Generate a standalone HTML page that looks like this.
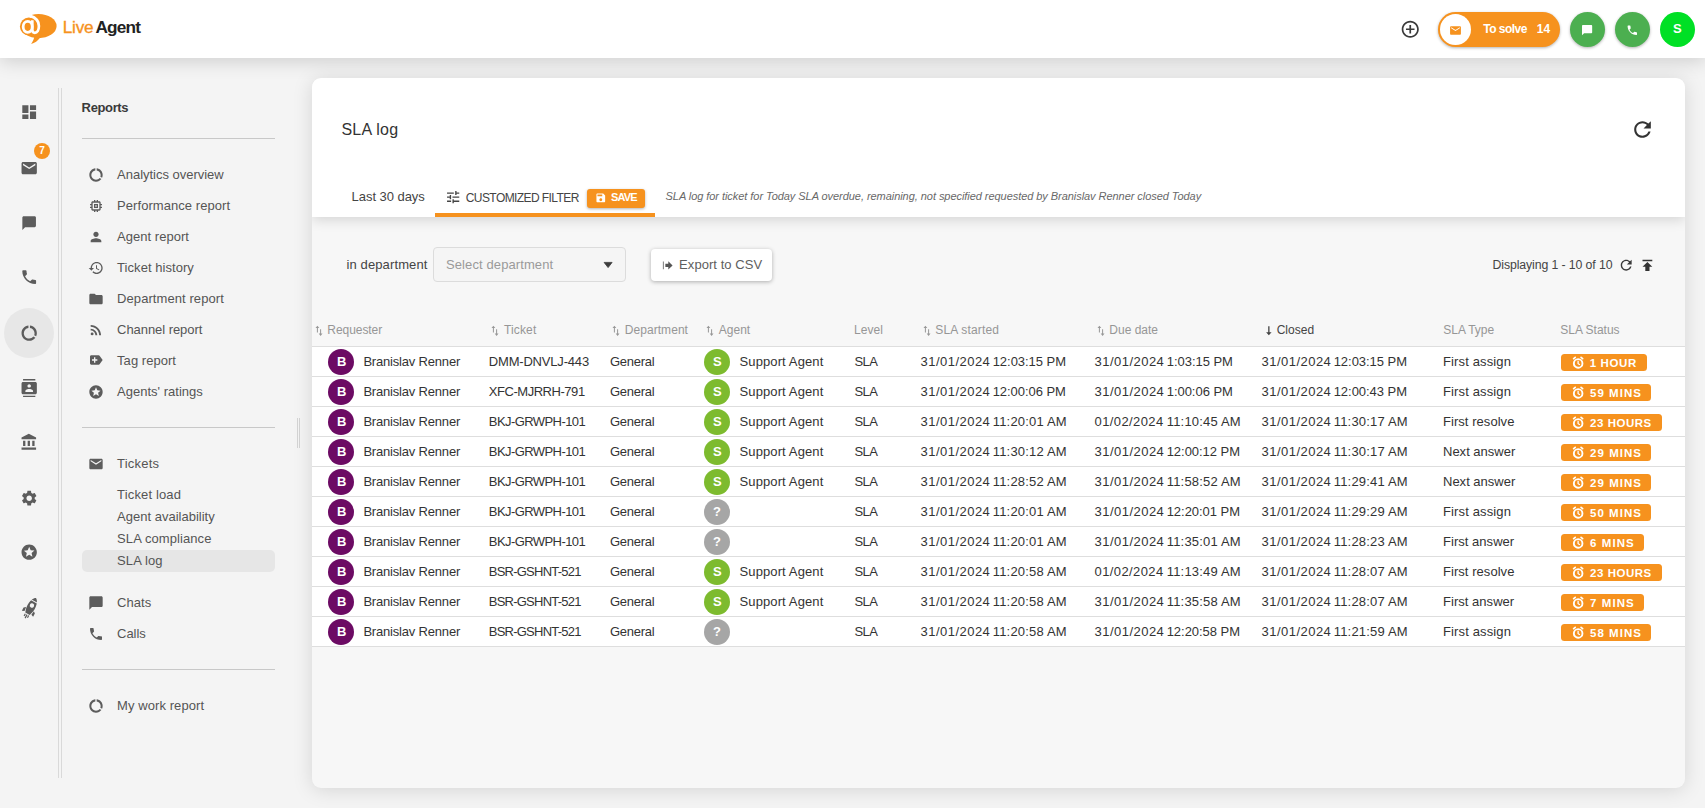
<!DOCTYPE html>
<html lang="en"><head><meta charset="utf-8"><title>SLA log - LiveAgent</title>
<style>
*{box-sizing:border-box;margin:0;padding:0}
html,body{width:1705px;height:808px;overflow:hidden;background:#f4f4f4;font-family:"Liberation Sans",sans-serif}
.t{position:absolute;white-space:nowrap;line-height:1}
.ic{position:absolute;display:block}
.hdr{position:absolute;left:0;top:0;width:1705px;height:58px;background:#fff;box-shadow:0 3px 18px rgba(0,0,0,.16)}
.pill{position:absolute;left:1438px;top:12px;width:122px;height:35px;border-radius:18px;background:#F6921E;box-shadow:0 1px 3px rgba(0,0,0,.3)}
.pillc{position:absolute;left:2px;top:2px;width:31px;height:31px;border-radius:50%;background:#fff}
.rb{position:absolute;top:12px;width:35px;height:35px;border-radius:50%;box-shadow:0 1px 3px rgba(0,0,0,.3)}
.vl{position:absolute;top:88px;width:1px;height:690px;background:#d9d9d9}
.actbg{position:absolute;left:4px;top:308px;width:50px;height:50px;border-radius:50%;background:#e7e7e7}
.bdg{position:absolute;left:33.9px;top:142.8px;width:16.1px;height:16.1px;border-radius:50%;background:#F6921E}
.hl{position:absolute;left:82px;width:193px;height:1px;background:#c8c8c8}
.sel{position:absolute;left:82px;top:550px;width:193px;height:22px;border-radius:5px;background:#e6e6e6}
.handle{position:absolute;top:418px;width:1px;height:30px;background:#d4d4d4}
.card{position:absolute;left:312px;top:78px;width:1373px;height:710px;border-radius:9px;background:#f7f7f7;box-shadow:0 2px 20px rgba(0,0,0,.13);overflow:hidden}
.cardtop{position:absolute;left:0;top:0;width:100%;height:139px;background:#fff;box-shadow:0 3px 12px rgba(0,0,0,.14)}
.tabline{position:absolute;left:435px;top:213px;width:220px;height:4px;background:#F6921E}
.savebtn{position:absolute;left:587px;top:189px;width:58px;height:18.5px;border-radius:3px;background:#F6921E;box-shadow:0 1px 3px rgba(0,0,0,.3)}
.selbox{position:absolute;left:433px;top:247px;width:193px;height:35px;border-radius:4px;background:#f5f5f5;border:1px solid #dcdcdc}
.expbtn{position:absolute;left:651px;top:249px;width:121px;height:32px;border-radius:4px;background:#fff;box-shadow:0 1px 4px rgba(0,0,0,.3)}
.tbl{position:absolute;left:312px;top:346px;width:1373px;height:301px;background:#fff;border-top:1px solid #dedede}
.row{position:absolute;left:0;width:100%;height:30px;border-bottom:1px solid #dedede}
.av{position:absolute;width:26px;height:26px;border-radius:50%}
.sb{position:absolute;left:1561px;height:17px;border-radius:3.5px;background:#F6921E}
</style></head>
<body>
<div class="hdr"></div>
<svg class="ic" style="left:14px;top:8px;width:50px;height:42px" viewBox="14 8 50 42">
<clipPath id="lc"><path d="M31.200 8H64V50H14V26.500H31.200z"/></clipPath>
<ellipse cx="38.500" cy="26.050" rx="18.100" ry="12.100" fill="#F6921E" clip-path="url(#lc)"/>
<ellipse cx="28.800" cy="26.500" rx="8.850" ry="8.900" fill="#F6921E"/>
<path fill="#F6921E" d="M34.300 36.500C33.800 39.500 32.700 42 31.100 43.900 34.800 43.100 37.800 40.900 40.200 37.500z"/>
<ellipse cx="27.700" cy="26.850" rx="4.550" ry="5.500" fill="none" stroke="#fff" stroke-width="2.800"/>
<path fill="none" stroke="#fff" stroke-width="2.700" d="M32.300 20.200v9.400c0 2.100.9 3.200 2.500 3.200 2.300 0 4.100-2.700 4.100-6.700 0-4.700-3.300-8.500-8.600-10.200"/>
</svg>
<svg class="ic" style="left:1399.95px;top:18.85px;width:20.5px;height:20.5px;" viewBox="0 0 24 24"><path fill="#3a3a3a" d="M13 7h-2v4H7v2h4v4h2v-4h4v-2h-4V7zm-1-5C6.48 2 2 6.48 2 12s4.48 10 10 10 10-4.48 10-10S17.52 2 12 2zm0 18c-4.41 0-8-3.59-8-8s3.59-8 8-8 8 3.59 8 8-3.59 8-8 8z"/></svg>
<div class="pill"><div class="pillc"></div></div>
<svg class="ic" style="left:1449.10px;top:24.00px;width:13px;height:13px;" viewBox="0 0 24 24"><path fill="#F6921E" d="M20 4H4c-1.1 0-1.99.9-1.99 2L2 18c0 1.1.9 2 2 2h16c1.1 0 2-.9 2-2V6c0-1.1-.9-2-2-2zm0 4l-8 5-8-5V6l8 5 8-5v2z"/></svg>
<div class="rb" style="left:1570px;background:#4CAF50"></div>
<div class="rb" style="left:1615px;background:#4CAF50"></div>
<div class="rb" style="left:1660px;background:#00E025;box-shadow:none"></div>
<svg class="ic" style="left:1581.40px;top:23.90px;width:12.2px;height:12.2px;" viewBox="0 0 24 24"><path fill="#fff" d="M20 2H4c-1.1 0-2 .9-2 2v18l4-4h14c1.1 0 2-.9 2-2V4c0-1.1-.9-2-2-2z"/></svg>
<svg class="ic" style="left:1626.10px;top:23.50px;width:12.6px;height:12.6px;" viewBox="0 0 24 24"><path fill="#fff" d="M6.62 10.79c1.44 2.83 3.76 5.14 6.59 6.59l2.2-2.2c.27-.27.67-.36 1.02-.24 1.12.37 2.33.57 3.57.57.55 0 1 .45 1 1V20c0 .55-.45 1-1 1-9.39 0-17-7.61-17-17 0-.55.45-1 1-1h3.5c.55 0 1 .45 1 1 0 1.25.2 2.45.57 3.57.11.35.03.74-.25 1.02l-2.2 2.2z"/></svg>
<div class="vl" style="left:58px"></div><div class="vl" style="left:61px"></div>
<div class="actbg"></div>
<svg class="ic" style="left:19.80px;top:103.30px;width:18.4px;height:18.4px;" viewBox="0 0 24 24"><path fill="#5c5c5c" d="M3 13h8V3H3v10zm0 8h8v-6H3v6zm10 0h8V11h-8v10zm0-18v6h8V3h-8z"/></svg>
<svg class="ic" style="left:19.80px;top:158.80px;width:18.4px;height:18.4px;" viewBox="0 0 24 24"><path fill="#5c5c5c" d="M20 4H4c-1.1 0-1.99.9-1.99 2L2 18c0 1.1.9 2 2 2h16c1.1 0 2-.9 2-2V6c0-1.1-.9-2-2-2zm0 4l-8 5-8-5V6l8 5 8-5v2z"/></svg>
<svg class="ic" style="left:20.85px;top:214.55px;width:16.3px;height:16.3px;" viewBox="0 0 24 24"><path fill="#5c5c5c" d="M20 2H4c-1.1 0-2 .9-2 2v18l4-4h14c1.1 0 2-.9 2-2V4c0-1.1-.9-2-2-2z"/></svg>
<svg class="ic" style="left:19.80px;top:268.40px;width:18.4px;height:18.4px;" viewBox="0 0 24 24"><path fill="#5c5c5c" d="M6.62 10.79c1.44 2.83 3.76 5.14 6.59 6.59l2.2-2.2c.27-.27.67-.36 1.02-.24 1.12.37 2.33.57 3.57.57.55 0 1 .45 1 1V20c0 .55-.45 1-1 1-9.39 0-17-7.61-17-17 0-.55.45-1 1-1h3.5c.55 0 1 .45 1 1 0 1.25.2 2.45.57 3.57.11.35.03.74-.25 1.02l-2.2 2.2z"/></svg>
<svg class="ic" style="left:19.80px;top:323.80px;width:18.4px;height:18.4px;" viewBox="0 0 24 24"><path fill="#5c5c5c" d="M13 2.05v3.03c3.39.49 6 3.39 6 6.92 0 .9-.18 1.75-.48 2.54l2.6 1.53c.56-1.24.88-2.62.88-4.07 0-5.18-3.95-9.45-9-9.95zM12 19c-3.87 0-7-3.13-7-7 0-3.53 2.61-6.43 6-6.92V2.05c-5.06.5-9 4.76-9 9.95 0 5.52 4.47 10 9.99 10 3.31 0 6.24-1.61 8.06-4.09l-2.6-1.53C16.17 17.98 14.21 19 12 19z"/></svg>
<svg class="ic" style="left:19.80px;top:378.80px;width:18.4px;height:18.4px;" viewBox="0 0 24 24"><path fill="#5c5c5c" d="M20 0H4v2h16V0zM4 24h16v-2H4v2zM20 4H4c-1.1 0-2 .9-2 2v12c0 1.1.9 2 2 2h16c1.1 0 2-.9 2-2V6c0-1.1-.9-2-2-2zm-8 2.75c1.24 0 2.25 1.01 2.25 2.25s-1.01 2.25-2.25 2.25S9.75 10.24 9.75 9 10.76 6.75 12 6.75zM17 17H7v-1.5c0-1.67 3.33-2.5 5-2.5s5 .83 5 2.5V17z"/></svg>
<svg class="ic" style="left:19.80px;top:433.10px;width:18.4px;height:18.4px;" viewBox="0 0 24 24"><path fill="#5c5c5c" d="M4 10v7h3v-7H4zm6 0v7h3v-7h-3zM2 22h19v-3H2v3zm14-12v7h3v-7h-3zm-4.5-9L2 6v2h19V6l-9.5-5z"/></svg>
<svg class="ic" style="left:19.80px;top:488.80px;width:18.4px;height:18.4px;" viewBox="0 0 24 24"><path fill="#5c5c5c" d="M19.14 12.94c.04-.3.06-.61.06-.94 0-.32-.02-.64-.07-.94l2.03-1.58c.18-.14.23-.41.12-.61l-1.92-3.32c-.12-.22-.37-.29-.59-.22l-2.39.96c-.5-.38-1.03-.7-1.62-.94l-.36-2.54c-.04-.24-.24-.41-.48-.41h-3.84c-.24 0-.43.17-.47.41l-.36 2.54c-.59.24-1.13.57-1.62.94l-2.39-.96c-.22-.08-.47 0-.59.22L2.74 8.87c-.12.21-.08.47.12.61l2.03 1.58c-.05.3-.09.63-.09.94s.02.64.07.94l-2.03 1.58c-.18.14-.23.41-.12.61l1.92 3.32c.12.22.37.29.59.22l2.39-.96c.5.38 1.03.7 1.62.94l.36 2.54c.05.24.24.41.48.41h3.84c.24 0 .44-.17.47-.41l.36-2.54c.59-.24 1.13-.56 1.62-.94l2.39.96c.22.08.47 0 .59-.22l1.92-3.32c.12-.22.07-.47-.12-.61l-2.01-1.58zM12 15.6c-1.98 0-3.6-1.62-3.6-3.6s1.62-3.6 3.6-3.6 3.6 1.62 3.6 3.6-1.62 3.6-3.6 3.6z"/></svg>
<svg class="ic" style="left:19.80px;top:542.80px;width:18.4px;height:18.4px;" viewBox="0 0 24 24"><path fill="#5c5c5c" d="M11.99 2C6.47 2 2 6.48 2 12s4.47 10 9.99 10C17.52 22 22 17.52 22 12S17.52 2 11.99 2zm4.24 16L12 15.45 7.77 18l1.12-4.81-3.73-3.23 4.92-.42L12 5l1.92 4.53 4.92.42-3.73 3.23L16.23 18z"/></svg>
<svg class="ic" style="left:17px;top:593px;width:26px;height:28px" viewBox="17 593 26 28"><g transform="translate(31.300 606.700) rotate(28.400)" fill="#5c5c5c">
<path d="M0-9.900C2.300-8.700 4.300-4.600 4.100.6 4 3.600 3.200 6 2.500 8H-2.500C-3.200 6-4 3.600-4.100.6-4.300-4.600-2.300-8.700 0-9.900z"/>
<path d="M-4.400 2.700-6.400 4.400V8L-3.900 7zM4.400 2.700 6.400 4.400V8L3.900 7z"/>
<path d="M-2.500 9h1.200v2.600h-1.200zM-.6 9H.6v4H-.6zM1.300 9h1.200v2.600H1.300z"/>
<circle cx="0" cy="-1.400" r="2.200" fill="#f4f4f4"/><path d="M-3.200-6.400H3.200v.9H-3.200z" fill="#f4f4f4"/></g></svg>
<div class="bdg"></div>
<div class="hl" style="top:138px"></div>
<div class="hl" style="top:427px"></div>
<div class="hl" style="top:669px"></div>
<div class="sel"></div>
<svg class="ic" style="left:87.90px;top:166.60px;width:16px;height:16px;" viewBox="0 0 24 24"><path fill="#5c5c5c" d="M13 2.05v3.03c3.39.49 6 3.39 6 6.92 0 .9-.18 1.75-.48 2.54l2.6 1.53c.56-1.24.88-2.62.88-4.07 0-5.18-3.95-9.45-9-9.95zM12 19c-3.87 0-7-3.13-7-7 0-3.53 2.61-6.43 6-6.92V2.05c-5.06.5-9 4.76-9 9.95 0 5.52 4.47 10 9.99 10 3.31 0 6.24-1.61 8.06-4.09l-2.6-1.53C16.17 17.98 14.21 19 12 19z"/></svg>
<svg class="ic" style="left:87.90px;top:197.60px;width:16px;height:16px;" viewBox="0 0 24 24"><path fill="#5c5c5c" d="M15 9H9v6h6V9zm-2 4h-2v-2h2v2zm8-2V9h-2V7c0-1.1-.9-2-2-2h-2V3h-2v2h-2V3H9v2H7c-1.1 0-2 .9-2 2v2H3v2h2v2H3v2h2v2c0 1.1.9 2 2 2h2v2h2v-2h2v2h2v-2h2c1.1 0 2-.9 2-2v-2h2v-2h-2v-2h2zm-4 6H7V7h10v10z"/></svg>
<svg class="ic" style="left:87.90px;top:228.60px;width:16px;height:16px;" viewBox="0 0 24 24"><path fill="#5c5c5c" d="M12 12c2.21 0 4-1.79 4-4s-1.79-4-4-4-4 1.79-4 4 1.79 4 4 4zm0 2c-2.67 0-8 1.34-8 4v2h16v-2c0-2.66-5.33-4-8-4z"/></svg>
<svg class="ic" style="left:87.90px;top:259.60px;width:16px;height:16px;" viewBox="0 0 24 24"><path fill="#5c5c5c" d="M13 3c-4.97 0-9 4.03-9 9H1l3.89 3.89.07.14L9 12H6c0-3.87 3.13-7 7-7s7 3.13 7 7-3.13 7-7 7c-1.93 0-3.68-.79-4.94-2.06l-1.42 1.42C8.27 19.99 10.51 21 13 21c4.97 0 9-4.03 9-9s-4.03-9-9-9zm-1 5v5l4.28 2.54.72-1.21-3.5-2.08V8H12z"/></svg>
<svg class="ic" style="left:87.90px;top:290.60px;width:16px;height:16px;" viewBox="0 0 24 24"><path fill="#5c5c5c" d="M10 4H4c-1.1 0-1.99.9-1.99 2L2 18c0 1.1.9 2 2 2h16c1.1 0 2-.9 2-2V8c0-1.1-.9-2-2-2h-8l-2-2z"/></svg>
<svg class="ic" style="left:87.90px;top:321.60px;width:16px;height:16px;" viewBox="0 0 24 24"><path fill="#5c5c5c" d="M6.18 15.64a2.18 2.18 0 1 0 0 4.36 2.18 2.18 0 0 0 0-4.36zM4 4.44v2.83c7.03 0 12.73 5.7 12.73 12.73h2.83c0-8.59-6.97-15.56-15.56-15.56zm0 5.66v2.83c3.9 0 7.07 3.17 7.07 7.07h2.83c0-5.47-4.43-9.9-9.9-9.9z"/></svg>
<svg class="ic" style="left:87.90px;top:351.80px;width:16px;height:16px;" viewBox="0 0 24 24"><path fill="#5c5c5c" d="M17.63 5.84C17.27 5.33 16.67 5 16 5L5 5.01C3.9 5.01 3 5.9 3 7v10c0 1.1.9 1.99 2 1.99L16 19c.67 0 1.27-.33 1.63-.84L22 12l-4.37-6.16zM14 13h-3v3H9v-3H6v-2h3V8h2v3h3v2z"/></svg>
<svg class="ic" style="left:87.90px;top:383.60px;width:16px;height:16px;" viewBox="0 0 24 24"><path fill="#5c5c5c" d="M11.99 2C6.47 2 2 6.48 2 12s4.47 10 9.99 10C17.52 22 22 17.52 22 12S17.52 2 11.99 2zm4.24 16L12 15.45 7.77 18l1.12-4.81-3.73-3.23 4.92-.42L12 5l1.92 4.53 4.92.42-3.73 3.23L16.23 18z"/></svg>
<svg class="ic" style="left:87.90px;top:455.60px;width:16px;height:16px;" viewBox="0 0 24 24"><path fill="#5c5c5c" d="M20 4H4c-1.1 0-1.99.9-1.99 2L2 18c0 1.1.9 2 2 2h16c1.1 0 2-.9 2-2V6c0-1.1-.9-2-2-2zm0 4l-8 5-8-5V6l8 5 8-5v2z"/></svg>
<svg class="ic" style="left:87.90px;top:594.60px;width:16px;height:16px;" viewBox="0 0 24 24"><path fill="#5c5c5c" d="M20 2H4c-1.1 0-2 .9-2 2v18l4-4h14c1.1 0 2-.9 2-2V4c0-1.1-.9-2-2-2z"/></svg>
<svg class="ic" style="left:87.90px;top:625.60px;width:16px;height:16px;" viewBox="0 0 24 24"><path fill="#5c5c5c" d="M6.62 10.79c1.44 2.83 3.76 5.14 6.59 6.59l2.2-2.2c.27-.27.67-.36 1.02-.24 1.12.37 2.33.57 3.57.57.55 0 1 .45 1 1V20c0 .55-.45 1-1 1-9.39 0-17-7.61-17-17 0-.55.45-1 1-1h3.5c.55 0 1 .45 1 1 0 1.25.2 2.45.57 3.57.11.35.03.74-.25 1.02l-2.2 2.2z"/></svg>
<svg class="ic" style="left:87.90px;top:697.60px;width:16px;height:16px;" viewBox="0 0 24 24"><path fill="#5c5c5c" d="M13 2.05v3.03c3.39.49 6 3.39 6 6.92 0 .9-.18 1.75-.48 2.54l2.6 1.53c.56-1.24.88-2.62.88-4.07 0-5.18-3.95-9.45-9-9.95zM12 19c-3.87 0-7-3.13-7-7 0-3.53 2.61-6.43 6-6.92V2.05c-5.06.5-9 4.76-9 9.95 0 5.52 4.47 10 9.99 10 3.31 0 6.24-1.61 8.06-4.09l-2.6-1.53C16.17 17.98 14.21 19 12 19z"/></svg>
<div class="handle" style="left:297px"></div><div class="handle" style="left:299px"></div>
<div class="card"><div class="cardtop"></div></div>
<svg class="ic" style="left:1629.80px;top:117.00px;width:25px;height:25px;" viewBox="0 0 24 24"><path fill="#333" d="M17.65 6.35C16.2 4.9 14.21 4 12 4c-4.42 0-7.99 3.58-7.99 8s3.57 8 7.99 8c3.73 0 6.84-2.55 7.73-6h-2.08c-.82 2.33-3.04 4-5.65 4-3.31 0-6-2.69-6-6s2.69-6 6-6c1.66 0 3.14.69 4.22 1.78L13 11h7V4l-2.35 2.35z"/></svg>
<svg class="ic" style="left:444.85px;top:188.85px;width:16.3px;height:16.3px;" viewBox="0 0 24 24"><path fill="#444" d="M3 17v2h6v-2H3zM3 5v2h10V5H3zm10 16v-2h8v-2h-8v-2h-2v6h2zM7 9v2H3v2h4v2h2V9H7zm14 4v-2H11v2h10zm-6-4h2V7h4V5h-4V3h-2v6z"/></svg>
<div class="savebtn"></div>
<svg class="ic" style="left:594.60px;top:191.50px;width:11.6px;height:11.6px;" viewBox="0 0 24 24"><path fill="#fff" d="M17 3H5c-1.11 0-2 .9-2 2v14c0 1.1.89 2 2 2h14c1.1 0 2-.9 2-2V7l-4-4zm-5 16c-1.66 0-3-1.34-3-3s1.34-3 3-3 3 1.34 3 3-1.34 3-3 3zm3-10H5V5h10v4z"/></svg>
<div class="tabline"></div>
<div class="selbox"></div>
<svg class="ic" style="left:602px;top:260px;width:12px;height:10px" viewBox="602 260 12 10"><path fill="#3c3c3c" stroke="#3c3c3c" stroke-width=".8" stroke-linejoin="round" d="M604.100 262.400h8l-4 5.200z"/></svg>
<div class="expbtn"></div>
<svg class="ic" style="left:661.90px;top:259.60px;width:10.8px;height:10.8px;" viewBox="0 0 24 24"><path fill="#555" d="M2 3.500h1.700v17H2v-17zm5.500 5h6.500V3l9.500 9-9.500 9v-5.500H7.500v-7z"/></svg>
<svg class="ic" style="left:1617.70px;top:256.90px;width:16.4px;height:16.4px;" viewBox="0 0 24 24"><path fill="#3a3a3a" d="M17.65 6.35C16.2 4.9 14.21 4 12 4c-4.42 0-7.99 3.58-7.99 8s3.57 8 7.99 8c3.73 0 6.84-2.55 7.73-6h-2.08c-.82 2.33-3.04 4-5.65 4-3.31 0-6-2.69-6-6s2.69-6 6-6c1.66 0 3.14.69 4.22 1.78L13 11h7V4l-2.35 2.35z"/></svg>
<svg class="ic" style="left:1638.50px;top:256.70px;width:16.8px;height:16.8px;" viewBox="0 0 24 24"><path fill="#333" d="M5 4v2h14V4H5zm0 10h4v6h6v-6h4l-7-7-7 7z"/></svg>
<svg class="ic" style="left:315.0px;top:325px;width:8px;height:12px" viewBox="0 0 8 12"><path fill="#979797" d="M1.900 2.200h1v5.200h-1zM.5 3.100 2.400.8l1.900 2.300zM5.100 4.300h1v5.200h-1zM3.700 8.600h3.800L5.600 10.900z"/></svg>
<svg class="ic" style="left:491.0px;top:325px;width:8px;height:12px" viewBox="0 0 8 12"><path fill="#979797" d="M1.900 2.200h1v5.200h-1zM.5 3.100 2.400.8l1.900 2.300zM5.100 4.300h1v5.200h-1zM3.700 8.600h3.800L5.600 10.900z"/></svg>
<svg class="ic" style="left:612.3px;top:325px;width:8px;height:12px" viewBox="0 0 8 12"><path fill="#979797" d="M1.900 2.200h1v5.200h-1zM.5 3.100 2.400.8l1.900 2.300zM5.100 4.300h1v5.200h-1zM3.700 8.600h3.800L5.600 10.900z"/></svg>
<svg class="ic" style="left:705.9px;top:325px;width:8px;height:12px" viewBox="0 0 8 12"><path fill="#979797" d="M1.900 2.200h1v5.200h-1zM.5 3.100 2.400.8l1.900 2.300zM5.100 4.300h1v5.200h-1zM3.700 8.600h3.800L5.600 10.900z"/></svg>
<svg class="ic" style="left:922.7px;top:325px;width:8px;height:12px" viewBox="0 0 8 12"><path fill="#979797" d="M1.900 2.200h1v5.200h-1zM.5 3.100 2.400.8l1.900 2.300zM5.100 4.300h1v5.200h-1zM3.700 8.600h3.800L5.600 10.900z"/></svg>
<svg class="ic" style="left:1096.9px;top:325px;width:8px;height:12px" viewBox="0 0 8 12"><path fill="#979797" d="M1.900 2.200h1v5.200h-1zM.5 3.100 2.400.8l1.900 2.300zM5.100 4.300h1v5.200h-1zM3.700 8.600h3.800L5.600 10.900z"/></svg>
<svg class="ic" style="left:1264.6px;top:325px;width:8px;height:12px" viewBox="0 0 8 12"><path fill="#444" d="M3.200 1.300h1.300v6.200h-1.300zM1.100 7.200h5.500L3.850 10.300z"/></svg>
<div class="tbl">
<div class="row" style="top:0px"></div>
<div class="row" style="top:30px"></div>
<div class="row" style="top:60px"></div>
<div class="row" style="top:90px"></div>
<div class="row" style="top:120px"></div>
<div class="row" style="top:150px"></div>
<div class="row" style="top:180px"></div>
<div class="row" style="top:210px"></div>
<div class="row" style="top:240px"></div>
<div class="row" style="top:270px"></div>
</div>
<div class="av" style="top:349px;left:328px;background:#6C0B64"></div>
<div class="av" style="top:349px;left:704px;background:#7DBB2E"></div>
<div class="sb" style="top:354px;width:86px"></div>
<svg class="ic" style="left:1571px;top:355px;width:14px;height:15px" viewBox="0 0 14 15"><g fill="none" stroke="#fff"><circle cx="7.150" cy="8.400" r="4.300" stroke-width="1.900"/><path stroke-width="1.300" d="M7.100 5.800v2.900l1.900 1.100"/><path stroke-width="1.800" stroke-linecap="round" d="M2.700 3.600 4.200 2.400M10.100 2.400l1.500 1.200"/></g></svg>
<div class="av" style="top:379px;left:328px;background:#6C0B64"></div>
<div class="av" style="top:379px;left:704px;background:#7DBB2E"></div>
<div class="sb" style="top:384px;width:90px"></div>
<svg class="ic" style="left:1571px;top:385px;width:14px;height:15px" viewBox="0 0 14 15"><g fill="none" stroke="#fff"><circle cx="7.150" cy="8.400" r="4.300" stroke-width="1.900"/><path stroke-width="1.300" d="M7.100 5.800v2.900l1.900 1.100"/><path stroke-width="1.800" stroke-linecap="round" d="M2.700 3.600 4.200 2.400M10.100 2.400l1.500 1.200"/></g></svg>
<div class="av" style="top:409px;left:328px;background:#6C0B64"></div>
<div class="av" style="top:409px;left:704px;background:#7DBB2E"></div>
<div class="sb" style="top:414px;width:100.6px"></div>
<svg class="ic" style="left:1571px;top:415px;width:14px;height:15px" viewBox="0 0 14 15"><g fill="none" stroke="#fff"><circle cx="7.150" cy="8.400" r="4.300" stroke-width="1.900"/><path stroke-width="1.300" d="M7.100 5.800v2.900l1.900 1.100"/><path stroke-width="1.800" stroke-linecap="round" d="M2.700 3.600 4.200 2.400M10.100 2.400l1.500 1.200"/></g></svg>
<div class="av" style="top:439px;left:328px;background:#6C0B64"></div>
<div class="av" style="top:439px;left:704px;background:#7DBB2E"></div>
<div class="sb" style="top:444px;width:90px"></div>
<svg class="ic" style="left:1571px;top:445px;width:14px;height:15px" viewBox="0 0 14 15"><g fill="none" stroke="#fff"><circle cx="7.150" cy="8.400" r="4.300" stroke-width="1.900"/><path stroke-width="1.300" d="M7.100 5.800v2.900l1.900 1.100"/><path stroke-width="1.800" stroke-linecap="round" d="M2.700 3.600 4.200 2.400M10.100 2.400l1.500 1.200"/></g></svg>
<div class="av" style="top:469px;left:328px;background:#6C0B64"></div>
<div class="av" style="top:469px;left:704px;background:#7DBB2E"></div>
<div class="sb" style="top:474px;width:90px"></div>
<svg class="ic" style="left:1571px;top:475px;width:14px;height:15px" viewBox="0 0 14 15"><g fill="none" stroke="#fff"><circle cx="7.150" cy="8.400" r="4.300" stroke-width="1.900"/><path stroke-width="1.300" d="M7.100 5.800v2.900l1.900 1.100"/><path stroke-width="1.800" stroke-linecap="round" d="M2.700 3.600 4.200 2.400M10.100 2.400l1.500 1.200"/></g></svg>
<div class="av" style="top:499px;left:328px;background:#6C0B64"></div>
<div class="av" style="top:499px;left:704px;background:#A6A6A6"></div>
<div class="sb" style="top:504px;width:90px"></div>
<svg class="ic" style="left:1571px;top:505px;width:14px;height:15px" viewBox="0 0 14 15"><g fill="none" stroke="#fff"><circle cx="7.150" cy="8.400" r="4.300" stroke-width="1.900"/><path stroke-width="1.300" d="M7.100 5.800v2.900l1.900 1.100"/><path stroke-width="1.800" stroke-linecap="round" d="M2.700 3.600 4.200 2.400M10.100 2.400l1.500 1.200"/></g></svg>
<div class="av" style="top:529px;left:328px;background:#6C0B64"></div>
<div class="av" style="top:529px;left:704px;background:#A6A6A6"></div>
<div class="sb" style="top:534px;width:82.5px"></div>
<svg class="ic" style="left:1571px;top:535px;width:14px;height:15px" viewBox="0 0 14 15"><g fill="none" stroke="#fff"><circle cx="7.150" cy="8.400" r="4.300" stroke-width="1.900"/><path stroke-width="1.300" d="M7.100 5.800v2.900l1.900 1.100"/><path stroke-width="1.800" stroke-linecap="round" d="M2.700 3.600 4.200 2.400M10.100 2.400l1.500 1.200"/></g></svg>
<div class="av" style="top:559px;left:328px;background:#6C0B64"></div>
<div class="av" style="top:559px;left:704px;background:#7DBB2E"></div>
<div class="sb" style="top:564px;width:100.6px"></div>
<svg class="ic" style="left:1571px;top:565px;width:14px;height:15px" viewBox="0 0 14 15"><g fill="none" stroke="#fff"><circle cx="7.150" cy="8.400" r="4.300" stroke-width="1.900"/><path stroke-width="1.300" d="M7.100 5.800v2.900l1.900 1.100"/><path stroke-width="1.800" stroke-linecap="round" d="M2.700 3.600 4.200 2.400M10.100 2.400l1.500 1.200"/></g></svg>
<div class="av" style="top:589px;left:328px;background:#6C0B64"></div>
<div class="av" style="top:589px;left:704px;background:#7DBB2E"></div>
<div class="sb" style="top:594px;width:82.5px"></div>
<svg class="ic" style="left:1571px;top:595px;width:14px;height:15px" viewBox="0 0 14 15"><g fill="none" stroke="#fff"><circle cx="7.150" cy="8.400" r="4.300" stroke-width="1.900"/><path stroke-width="1.300" d="M7.100 5.800v2.900l1.900 1.100"/><path stroke-width="1.800" stroke-linecap="round" d="M2.700 3.600 4.200 2.400M10.100 2.400l1.500 1.200"/></g></svg>
<div class="av" style="top:619px;left:328px;background:#6C0B64"></div>
<div class="av" style="top:619px;left:704px;background:#A6A6A6"></div>
<div class="sb" style="top:624px;width:90px"></div>
<svg class="ic" style="left:1571px;top:625px;width:14px;height:15px" viewBox="0 0 14 15"><g fill="none" stroke="#fff"><circle cx="7.150" cy="8.400" r="4.300" stroke-width="1.900"/><path stroke-width="1.300" d="M7.100 5.800v2.900l1.900 1.100"/><path stroke-width="1.800" stroke-linecap="round" d="M2.700 3.600 4.200 2.400M10.100 2.400l1.500 1.200"/></g></svg>
<span class="t" style="left:62.67px;top:19.00px;font-size:17.2px;color:#F6921E;-webkit-text-stroke:.35px #F6921E;letter-spacing:-0.170px;">Live</span>
<span class="t" style="left:95.46px;top:19.00px;font-size:17.2px;color:#222;font-weight:700;letter-spacing:-0.783px;">Agent</span>
<span class="t" style="left:1483.25px;top:23.00px;font-size:12px;color:#fff;font-weight:700;letter-spacing:-0.520px;">To solve</span>
<span class="t" style="left:1536.76px;top:23.00px;font-size:12px;color:#fff;font-weight:700;letter-spacing:0.090px;">14</span>
<span class="t" style="left:1672.90px;top:22.00px;font-size:13px;color:#fff;font-weight:700;">S</span>
<span class="t" style="left:39.20px;top:146.00px;font-size:10px;color:#fff;font-weight:700;">7</span>
<span class="t" style="left:81.62px;top:101.00px;font-size:13px;color:#3a3a3a;font-weight:700;letter-spacing:-0.367px;">Reports</span>
<span class="t" style="left:117.10px;top:168.00px;font-size:13px;color:#555;letter-spacing:-0.019px;">Analytics overview</span>
<span class="t" style="left:117.10px;top:199.00px;font-size:13px;color:#555;letter-spacing:0.058px;">Performance report</span>
<span class="t" style="left:117.10px;top:230.00px;font-size:13px;color:#555;letter-spacing:0.026px;">Agent report</span>
<span class="t" style="left:117.10px;top:261.00px;font-size:13px;color:#555;letter-spacing:0.053px;">Ticket history</span>
<span class="t" style="left:117.10px;top:292.00px;font-size:13px;color:#555;letter-spacing:0.074px;">Department report</span>
<span class="t" style="left:117.10px;top:323.00px;font-size:13px;color:#555;letter-spacing:-0.062px;">Channel report</span>
<span class="t" style="left:117.10px;top:354.00px;font-size:13px;color:#555;letter-spacing:0.029px;">Tag report</span>
<span class="t" style="left:117.10px;top:385.00px;font-size:13px;color:#555;letter-spacing:0.006px;">Agents&#x27; ratings</span>
<span class="t" style="left:117.10px;top:457.00px;font-size:13px;color:#555;letter-spacing:0.210px;">Tickets</span>
<span class="t" style="left:117.10px;top:488.00px;font-size:13px;color:#555;letter-spacing:0.147px;">Ticket load</span>
<span class="t" style="left:117.10px;top:510.00px;font-size:13px;color:#555;letter-spacing:0.002px;">Agent availability</span>
<span class="t" style="left:117.10px;top:532.00px;font-size:13px;color:#555;letter-spacing:0.083px;">SLA compliance</span>
<span class="t" style="left:117.10px;top:554.00px;font-size:13px;color:#555;letter-spacing:0.099px;">SLA log</span>
<span class="t" style="left:117.10px;top:596.00px;font-size:13px;color:#555;letter-spacing:0.024px;">Chats</span>
<span class="t" style="left:117.10px;top:627.00px;font-size:13px;color:#555;letter-spacing:-0.065px;">Calls</span>
<span class="t" style="left:117.10px;top:699.00px;font-size:13px;color:#555;letter-spacing:0.074px;">My work report</span>
<span class="t" style="left:341.39px;top:122.00px;font-size:16px;color:#333;letter-spacing:0.260px;">SLA log</span>
<span class="t" style="left:351.61px;top:190.00px;font-size:13px;color:#444;letter-spacing:-0.051px;">Last 30 days</span>
<span class="t" style="left:465.79px;top:192.00px;font-size:12px;color:#444;letter-spacing:-0.582px;">CUSTOMIZED FILTER</span>
<span class="t" style="left:610.93px;top:192.00px;font-size:11px;color:#fff;font-weight:700;letter-spacing:-0.797px;">SAVE</span>
<span class="t" style="left:665.54px;top:191.00px;font-size:11px;color:#686868;font-style:italic;letter-spacing:-0.053px;">SLA log for ticket for Today SLA overdue, remaining, not specified requested by Branislav Renner closed Today</span>
<span class="t" style="left:346.49px;top:258.00px;font-size:13px;color:#444;letter-spacing:0.120px;">in department</span>
<span class="t" style="left:446.02px;top:258.00px;font-size:13px;color:#9a9a9a;letter-spacing:0.101px;">Select department</span>
<span class="t" style="left:679.11px;top:258.00px;font-size:13px;color:#5e5e5e;letter-spacing:0.053px;">Export to CSV</span>
<span class="t" style="left:1492.57px;top:259.00px;font-size:12.3px;color:#444;letter-spacing:-0.111px;">Displaying 1 - 10 of 10</span>
<span class="t" style="left:327.32px;top:324.00px;font-size:12px;color:#969696;letter-spacing:-0.055px;">Requester</span>
<span class="t" style="left:503.97px;top:324.00px;font-size:12px;color:#969696;letter-spacing:0.147px;">Ticket</span>
<span class="t" style="left:624.76px;top:324.00px;font-size:12px;color:#969696;letter-spacing:0.056px;">Department</span>
<span class="t" style="left:718.86px;top:324.00px;font-size:12px;color:#969696;letter-spacing:-0.012px;">Agent</span>
<span class="t" style="left:854.12px;top:324.00px;font-size:12px;color:#969696;letter-spacing:0.014px;">Level</span>
<span class="t" style="left:935.35px;top:324.00px;font-size:12px;color:#969696;letter-spacing:0.158px;">SLA started</span>
<span class="t" style="left:1109.36px;top:324.00px;font-size:12px;color:#969696;letter-spacing:-0.009px;">Due date</span>
<span class="t" style="left:1276.70px;top:324.00px;font-size:12px;color:#444;letter-spacing:0.009px;">Closed</span>
<span class="t" style="left:1443.35px;top:324.00px;font-size:12px;color:#969696;letter-spacing:-0.061px;">SLA Type</span>
<span class="t" style="left:1560.25px;top:324.00px;font-size:12px;color:#969696;letter-spacing:-0.002px;">SLA Status</span>
<span class="t" style="left:336.90px;top:355.00px;font-size:13px;color:#fff;font-weight:700;">B</span>
<span class="t" style="left:363.40px;top:355.00px;font-size:13px;color:#333;letter-spacing:-0.190px;">Branislav Renner</span>
<span class="t" style="left:488.80px;top:355.00px;font-size:13px;color:#333;letter-spacing:-0.188px;">DMM-DNVLJ-443</span>
<span class="t" style="left:610.00px;top:355.00px;font-size:13px;color:#333;letter-spacing:-0.264px;">General</span>
<span class="t" style="left:713.00px;top:355.00px;font-size:13px;color:#fff;font-weight:700;">S</span>
<span class="t" style="left:739.50px;top:355.00px;font-size:13px;color:#333;letter-spacing:0.117px;">Support Agent</span>
<span class="t" style="left:854.50px;top:355.00px;font-size:13px;color:#333;letter-spacing:-0.553px;">SLA</span>
<span class="t" style="left:920.50px;top:355.00px;font-size:13px;color:#333;letter-spacing:0.472px;">31/01/2024</span>
<span class="t" style="left:992.70px;top:355.00px;font-size:13px;color:#333;letter-spacing:-0.044px;">12:03:15 PM</span>
<span class="t" style="left:1094.50px;top:355.00px;font-size:13px;color:#333;letter-spacing:0.472px;">31/01/2024</span>
<span class="t" style="left:1166.70px;top:355.00px;font-size:13px;color:#333;letter-spacing:-0.028px;">1:03:15 PM</span>
<span class="t" style="left:1261.50px;top:355.00px;font-size:13px;color:#333;letter-spacing:0.472px;">31/01/2024</span>
<span class="t" style="left:1333.70px;top:355.00px;font-size:13px;color:#333;letter-spacing:-0.044px;">12:03:15 PM</span>
<span class="t" style="left:1443.00px;top:355.00px;font-size:13px;color:#333;letter-spacing:0.130px;">First assign</span>
<span class="t" style="left:1589.72px;top:358.00px;font-size:11.5px;color:#fff;font-weight:700;letter-spacing:0.614px;">1 HOUR</span>
<span class="t" style="left:336.90px;top:385.00px;font-size:13px;color:#fff;font-weight:700;">B</span>
<span class="t" style="left:363.40px;top:385.00px;font-size:13px;color:#333;letter-spacing:-0.190px;">Branislav Renner</span>
<span class="t" style="left:488.80px;top:385.00px;font-size:13px;color:#333;letter-spacing:-0.461px;">XFC-MJRRH-791</span>
<span class="t" style="left:610.00px;top:385.00px;font-size:13px;color:#333;letter-spacing:-0.264px;">General</span>
<span class="t" style="left:713.00px;top:385.00px;font-size:13px;color:#fff;font-weight:700;">S</span>
<span class="t" style="left:739.50px;top:385.00px;font-size:13px;color:#333;letter-spacing:0.117px;">Support Agent</span>
<span class="t" style="left:854.50px;top:385.00px;font-size:13px;color:#333;letter-spacing:-0.553px;">SLA</span>
<span class="t" style="left:920.50px;top:385.00px;font-size:13px;color:#333;letter-spacing:0.472px;">31/01/2024</span>
<span class="t" style="left:992.70px;top:385.00px;font-size:13px;color:#333;letter-spacing:-0.045px;">12:00:06 PM</span>
<span class="t" style="left:1094.50px;top:385.00px;font-size:13px;color:#333;letter-spacing:0.472px;">31/01/2024</span>
<span class="t" style="left:1166.70px;top:385.00px;font-size:13px;color:#333;letter-spacing:-0.033px;">1:00:06 PM</span>
<span class="t" style="left:1261.50px;top:385.00px;font-size:13px;color:#333;letter-spacing:0.472px;">31/01/2024</span>
<span class="t" style="left:1333.70px;top:385.00px;font-size:13px;color:#333;letter-spacing:-0.044px;">12:00:43 PM</span>
<span class="t" style="left:1443.00px;top:385.00px;font-size:13px;color:#333;letter-spacing:0.130px;">First assign</span>
<span class="t" style="left:1589.93px;top:388.00px;font-size:11.5px;color:#fff;font-weight:700;letter-spacing:1.061px;">59 MINS</span>
<span class="t" style="left:336.90px;top:415.00px;font-size:13px;color:#fff;font-weight:700;">B</span>
<span class="t" style="left:363.40px;top:415.00px;font-size:13px;color:#333;letter-spacing:-0.190px;">Branislav Renner</span>
<span class="t" style="left:488.80px;top:415.00px;font-size:13px;color:#333;letter-spacing:-0.571px;">BKJ-GRWPH-101</span>
<span class="t" style="left:610.00px;top:415.00px;font-size:13px;color:#333;letter-spacing:-0.264px;">General</span>
<span class="t" style="left:713.00px;top:415.00px;font-size:13px;color:#fff;font-weight:700;">S</span>
<span class="t" style="left:739.50px;top:415.00px;font-size:13px;color:#333;letter-spacing:0.117px;">Support Agent</span>
<span class="t" style="left:854.50px;top:415.00px;font-size:13px;color:#333;letter-spacing:-0.553px;">SLA</span>
<span class="t" style="left:920.50px;top:415.00px;font-size:13px;color:#333;letter-spacing:0.472px;">31/01/2024</span>
<span class="t" style="left:992.70px;top:415.00px;font-size:13px;color:#333;letter-spacing:0.198px;">11:20:01 AM</span>
<span class="t" style="left:1094.50px;top:415.00px;font-size:13px;color:#333;letter-spacing:0.396px;">01/02/2024</span>
<span class="t" style="left:1166.70px;top:415.00px;font-size:13px;color:#333;letter-spacing:0.198px;">11:10:45 AM</span>
<span class="t" style="left:1261.50px;top:415.00px;font-size:13px;color:#333;letter-spacing:0.472px;">31/01/2024</span>
<span class="t" style="left:1333.70px;top:415.00px;font-size:13px;color:#333;letter-spacing:0.198px;">11:30:17 AM</span>
<span class="t" style="left:1443.00px;top:415.00px;font-size:13px;color:#333;letter-spacing:0.051px;">First resolve</span>
<span class="t" style="left:1590.09px;top:418.00px;font-size:11.5px;color:#fff;font-weight:700;letter-spacing:0.527px;">23 HOURS</span>
<span class="t" style="left:336.90px;top:445.00px;font-size:13px;color:#fff;font-weight:700;">B</span>
<span class="t" style="left:363.40px;top:445.00px;font-size:13px;color:#333;letter-spacing:-0.190px;">Branislav Renner</span>
<span class="t" style="left:488.80px;top:445.00px;font-size:13px;color:#333;letter-spacing:-0.571px;">BKJ-GRWPH-101</span>
<span class="t" style="left:610.00px;top:445.00px;font-size:13px;color:#333;letter-spacing:-0.264px;">General</span>
<span class="t" style="left:713.00px;top:445.00px;font-size:13px;color:#fff;font-weight:700;">S</span>
<span class="t" style="left:739.50px;top:445.00px;font-size:13px;color:#333;letter-spacing:0.117px;">Support Agent</span>
<span class="t" style="left:854.50px;top:445.00px;font-size:13px;color:#333;letter-spacing:-0.553px;">SLA</span>
<span class="t" style="left:920.50px;top:445.00px;font-size:13px;color:#333;letter-spacing:0.472px;">31/01/2024</span>
<span class="t" style="left:992.70px;top:445.00px;font-size:13px;color:#333;letter-spacing:0.198px;">11:30:12 AM</span>
<span class="t" style="left:1094.50px;top:445.00px;font-size:13px;color:#333;letter-spacing:0.472px;">31/01/2024</span>
<span class="t" style="left:1166.70px;top:445.00px;font-size:13px;color:#333;letter-spacing:-0.044px;">12:00:12 PM</span>
<span class="t" style="left:1261.50px;top:445.00px;font-size:13px;color:#333;letter-spacing:0.472px;">31/01/2024</span>
<span class="t" style="left:1333.70px;top:445.00px;font-size:13px;color:#333;letter-spacing:0.198px;">11:30:17 AM</span>
<span class="t" style="left:1443.00px;top:445.00px;font-size:13px;color:#333;letter-spacing:0.003px;">Next answer</span>
<span class="t" style="left:1590.09px;top:448.00px;font-size:11.5px;color:#fff;font-weight:700;letter-spacing:1.021px;">29 MINS</span>
<span class="t" style="left:336.90px;top:475.00px;font-size:13px;color:#fff;font-weight:700;">B</span>
<span class="t" style="left:363.40px;top:475.00px;font-size:13px;color:#333;letter-spacing:-0.190px;">Branislav Renner</span>
<span class="t" style="left:488.80px;top:475.00px;font-size:13px;color:#333;letter-spacing:-0.571px;">BKJ-GRWPH-101</span>
<span class="t" style="left:610.00px;top:475.00px;font-size:13px;color:#333;letter-spacing:-0.264px;">General</span>
<span class="t" style="left:713.00px;top:475.00px;font-size:13px;color:#fff;font-weight:700;">S</span>
<span class="t" style="left:739.50px;top:475.00px;font-size:13px;color:#333;letter-spacing:0.117px;">Support Agent</span>
<span class="t" style="left:854.50px;top:475.00px;font-size:13px;color:#333;letter-spacing:-0.553px;">SLA</span>
<span class="t" style="left:920.50px;top:475.00px;font-size:13px;color:#333;letter-spacing:0.472px;">31/01/2024</span>
<span class="t" style="left:992.70px;top:475.00px;font-size:13px;color:#333;letter-spacing:0.198px;">11:28:52 AM</span>
<span class="t" style="left:1094.50px;top:475.00px;font-size:13px;color:#333;letter-spacing:0.472px;">31/01/2024</span>
<span class="t" style="left:1166.70px;top:475.00px;font-size:13px;color:#333;letter-spacing:0.198px;">11:58:52 AM</span>
<span class="t" style="left:1261.50px;top:475.00px;font-size:13px;color:#333;letter-spacing:0.472px;">31/01/2024</span>
<span class="t" style="left:1333.70px;top:475.00px;font-size:13px;color:#333;letter-spacing:0.198px;">11:29:41 AM</span>
<span class="t" style="left:1443.00px;top:475.00px;font-size:13px;color:#333;letter-spacing:0.003px;">Next answer</span>
<span class="t" style="left:1590.09px;top:478.00px;font-size:11.5px;color:#fff;font-weight:700;letter-spacing:1.021px;">29 MINS</span>
<span class="t" style="left:336.90px;top:505.00px;font-size:13px;color:#fff;font-weight:700;">B</span>
<span class="t" style="left:363.40px;top:505.00px;font-size:13px;color:#333;letter-spacing:-0.190px;">Branislav Renner</span>
<span class="t" style="left:488.80px;top:505.00px;font-size:13px;color:#333;letter-spacing:-0.571px;">BKJ-GRWPH-101</span>
<span class="t" style="left:610.00px;top:505.00px;font-size:13px;color:#333;letter-spacing:-0.264px;">General</span>
<span class="t" style="left:712.90px;top:505.00px;font-size:13px;color:#fff;font-weight:700;">?</span>
<span class="t" style="left:854.50px;top:505.00px;font-size:13px;color:#333;letter-spacing:-0.553px;">SLA</span>
<span class="t" style="left:920.50px;top:505.00px;font-size:13px;color:#333;letter-spacing:0.472px;">31/01/2024</span>
<span class="t" style="left:992.70px;top:505.00px;font-size:13px;color:#333;letter-spacing:0.198px;">11:20:01 AM</span>
<span class="t" style="left:1094.50px;top:505.00px;font-size:13px;color:#333;letter-spacing:0.472px;">31/01/2024</span>
<span class="t" style="left:1166.70px;top:505.00px;font-size:13px;color:#333;letter-spacing:-0.044px;">12:20:01 PM</span>
<span class="t" style="left:1261.50px;top:505.00px;font-size:13px;color:#333;letter-spacing:0.472px;">31/01/2024</span>
<span class="t" style="left:1333.70px;top:505.00px;font-size:13px;color:#333;letter-spacing:0.198px;">11:29:29 AM</span>
<span class="t" style="left:1443.00px;top:505.00px;font-size:13px;color:#333;letter-spacing:0.130px;">First assign</span>
<span class="t" style="left:1589.93px;top:508.00px;font-size:11.5px;color:#fff;font-weight:700;letter-spacing:1.061px;">50 MINS</span>
<span class="t" style="left:336.90px;top:535.00px;font-size:13px;color:#fff;font-weight:700;">B</span>
<span class="t" style="left:363.40px;top:535.00px;font-size:13px;color:#333;letter-spacing:-0.190px;">Branislav Renner</span>
<span class="t" style="left:488.80px;top:535.00px;font-size:13px;color:#333;letter-spacing:-0.571px;">BKJ-GRWPH-101</span>
<span class="t" style="left:610.00px;top:535.00px;font-size:13px;color:#333;letter-spacing:-0.264px;">General</span>
<span class="t" style="left:712.90px;top:535.00px;font-size:13px;color:#fff;font-weight:700;">?</span>
<span class="t" style="left:854.50px;top:535.00px;font-size:13px;color:#333;letter-spacing:-0.553px;">SLA</span>
<span class="t" style="left:920.50px;top:535.00px;font-size:13px;color:#333;letter-spacing:0.472px;">31/01/2024</span>
<span class="t" style="left:992.70px;top:535.00px;font-size:13px;color:#333;letter-spacing:0.198px;">11:20:01 AM</span>
<span class="t" style="left:1094.50px;top:535.00px;font-size:13px;color:#333;letter-spacing:0.472px;">31/01/2024</span>
<span class="t" style="left:1166.70px;top:535.00px;font-size:13px;color:#333;letter-spacing:0.198px;">11:35:01 AM</span>
<span class="t" style="left:1261.50px;top:535.00px;font-size:13px;color:#333;letter-spacing:0.472px;">31/01/2024</span>
<span class="t" style="left:1333.70px;top:535.00px;font-size:13px;color:#333;letter-spacing:0.198px;">11:28:23 AM</span>
<span class="t" style="left:1443.00px;top:535.00px;font-size:13px;color:#333;letter-spacing:0.034px;">First answer</span>
<span class="t" style="left:1590.05px;top:538.00px;font-size:11.5px;color:#fff;font-weight:700;letter-spacing:1.057px;">6 MINS</span>
<span class="t" style="left:336.90px;top:565.00px;font-size:13px;color:#fff;font-weight:700;">B</span>
<span class="t" style="left:363.40px;top:565.00px;font-size:13px;color:#333;letter-spacing:-0.190px;">Branislav Renner</span>
<span class="t" style="left:488.80px;top:565.00px;font-size:13px;color:#333;letter-spacing:-0.770px;">BSR-GSHNT-521</span>
<span class="t" style="left:610.00px;top:565.00px;font-size:13px;color:#333;letter-spacing:-0.264px;">General</span>
<span class="t" style="left:713.00px;top:565.00px;font-size:13px;color:#fff;font-weight:700;">S</span>
<span class="t" style="left:739.50px;top:565.00px;font-size:13px;color:#333;letter-spacing:0.117px;">Support Agent</span>
<span class="t" style="left:854.50px;top:565.00px;font-size:13px;color:#333;letter-spacing:-0.553px;">SLA</span>
<span class="t" style="left:920.50px;top:565.00px;font-size:13px;color:#333;letter-spacing:0.472px;">31/01/2024</span>
<span class="t" style="left:992.70px;top:565.00px;font-size:13px;color:#333;letter-spacing:0.198px;">11:20:58 AM</span>
<span class="t" style="left:1094.50px;top:565.00px;font-size:13px;color:#333;letter-spacing:0.396px;">01/02/2024</span>
<span class="t" style="left:1166.70px;top:565.00px;font-size:13px;color:#333;letter-spacing:0.198px;">11:13:49 AM</span>
<span class="t" style="left:1261.50px;top:565.00px;font-size:13px;color:#333;letter-spacing:0.472px;">31/01/2024</span>
<span class="t" style="left:1333.70px;top:565.00px;font-size:13px;color:#333;letter-spacing:0.198px;">11:28:07 AM</span>
<span class="t" style="left:1443.00px;top:565.00px;font-size:13px;color:#333;letter-spacing:0.051px;">First resolve</span>
<span class="t" style="left:1590.09px;top:568.00px;font-size:11.5px;color:#fff;font-weight:700;letter-spacing:0.527px;">23 HOURS</span>
<span class="t" style="left:336.90px;top:595.00px;font-size:13px;color:#fff;font-weight:700;">B</span>
<span class="t" style="left:363.40px;top:595.00px;font-size:13px;color:#333;letter-spacing:-0.190px;">Branislav Renner</span>
<span class="t" style="left:488.80px;top:595.00px;font-size:13px;color:#333;letter-spacing:-0.770px;">BSR-GSHNT-521</span>
<span class="t" style="left:610.00px;top:595.00px;font-size:13px;color:#333;letter-spacing:-0.264px;">General</span>
<span class="t" style="left:713.00px;top:595.00px;font-size:13px;color:#fff;font-weight:700;">S</span>
<span class="t" style="left:739.50px;top:595.00px;font-size:13px;color:#333;letter-spacing:0.117px;">Support Agent</span>
<span class="t" style="left:854.50px;top:595.00px;font-size:13px;color:#333;letter-spacing:-0.553px;">SLA</span>
<span class="t" style="left:920.50px;top:595.00px;font-size:13px;color:#333;letter-spacing:0.472px;">31/01/2024</span>
<span class="t" style="left:992.70px;top:595.00px;font-size:13px;color:#333;letter-spacing:0.198px;">11:20:58 AM</span>
<span class="t" style="left:1094.50px;top:595.00px;font-size:13px;color:#333;letter-spacing:0.472px;">31/01/2024</span>
<span class="t" style="left:1166.70px;top:595.00px;font-size:13px;color:#333;letter-spacing:0.198px;">11:35:58 AM</span>
<span class="t" style="left:1261.50px;top:595.00px;font-size:13px;color:#333;letter-spacing:0.472px;">31/01/2024</span>
<span class="t" style="left:1333.70px;top:595.00px;font-size:13px;color:#333;letter-spacing:0.198px;">11:28:07 AM</span>
<span class="t" style="left:1443.00px;top:595.00px;font-size:13px;color:#333;letter-spacing:0.034px;">First answer</span>
<span class="t" style="left:1590.00px;top:598.00px;font-size:11.5px;color:#fff;font-weight:700;letter-spacing:1.070px;">7 MINS</span>
<span class="t" style="left:336.90px;top:625.00px;font-size:13px;color:#fff;font-weight:700;">B</span>
<span class="t" style="left:363.40px;top:625.00px;font-size:13px;color:#333;letter-spacing:-0.190px;">Branislav Renner</span>
<span class="t" style="left:488.80px;top:625.00px;font-size:13px;color:#333;letter-spacing:-0.770px;">BSR-GSHNT-521</span>
<span class="t" style="left:610.00px;top:625.00px;font-size:13px;color:#333;letter-spacing:-0.264px;">General</span>
<span class="t" style="left:712.90px;top:625.00px;font-size:13px;color:#fff;font-weight:700;">?</span>
<span class="t" style="left:854.50px;top:625.00px;font-size:13px;color:#333;letter-spacing:-0.553px;">SLA</span>
<span class="t" style="left:920.50px;top:625.00px;font-size:13px;color:#333;letter-spacing:0.472px;">31/01/2024</span>
<span class="t" style="left:992.70px;top:625.00px;font-size:13px;color:#333;letter-spacing:0.198px;">11:20:58 AM</span>
<span class="t" style="left:1094.50px;top:625.00px;font-size:13px;color:#333;letter-spacing:0.472px;">31/01/2024</span>
<span class="t" style="left:1166.70px;top:625.00px;font-size:13px;color:#333;letter-spacing:-0.044px;">12:20:58 PM</span>
<span class="t" style="left:1261.50px;top:625.00px;font-size:13px;color:#333;letter-spacing:0.472px;">31/01/2024</span>
<span class="t" style="left:1333.70px;top:625.00px;font-size:13px;color:#333;letter-spacing:0.198px;">11:21:59 AM</span>
<span class="t" style="left:1443.00px;top:625.00px;font-size:13px;color:#333;letter-spacing:0.130px;">First assign</span>
<span class="t" style="left:1589.93px;top:628.00px;font-size:11.5px;color:#fff;font-weight:700;letter-spacing:1.061px;">58 MINS</span>
</body></html>
